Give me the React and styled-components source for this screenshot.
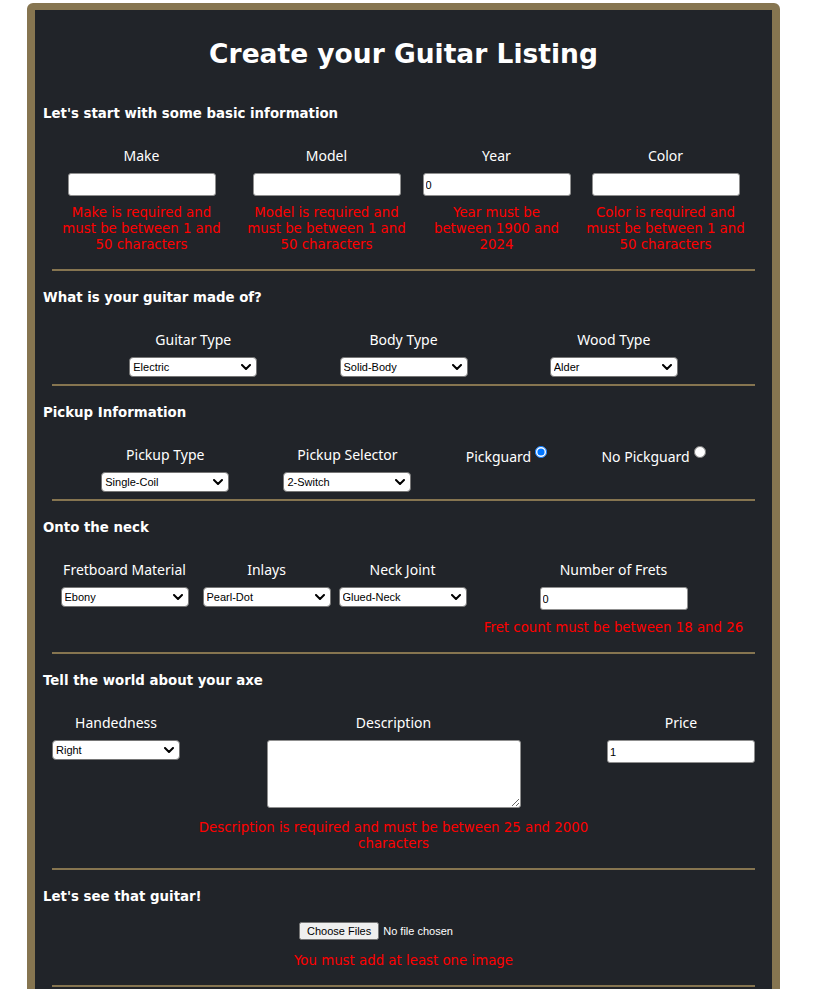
import React from 'react';
import styled, { createGlobalStyle } from 'styled-components';

const Global = createGlobalStyle`
  html, body { margin: 0; padding: 0; background: #ffffff; }
  body { font-family: "DejaVu Sans", Verdana, sans-serif; }
`;

const Card = styled.form`
  box-sizing: border-box;
  width: 753px;
  margin: 3px 0 0 27px;
  border: 8px solid #867550;
  border-top-width: 7px;
  border-radius: 6px;
  background: #212429;
  color: #ffffff;
  padding: 0 8px 40px;
`;

const Title = styled.h1`
  margin: 28px 0 17px;
  font-family: "DejaVu Sans", Verdana, sans-serif;
  font-weight: bold;
  font-size: 26.5px;
  line-height: 32px;
  text-align: center;
`;

const Section = styled.section`
  padding-top: 19px;
`;

const Heading = styled.h5`
  margin: 0 0 ${(p) => p.$mb ?? 24}px;
  font-family: "DejaVu Sans", Verdana, sans-serif;
  font-weight: bold;
  font-size: 13.33px;
  line-height: 16px;
`;

const Divider = styled.hr`
  margin: 0 9px;
  border: 0;
  height: 2px;
  background: #867550;
`;

const GridRow = styled.div`
  display: grid;
  grid-template-columns: ${(p) => p.$cols};
  justify-items: center;
  align-items: start;
  margin: 0 4px 7px;
`;

const FlexRow = styled.div`
  display: flex;
  justify-content: ${(p) => p.$justify || 'space-evenly'};
  align-items: flex-start;
  margin: 0 ${(p) => p.$side || 4}px 7px;
`;

const Field = styled.div`
  display: flex;
  flex-direction: column;
  align-items: center;
  box-sizing: border-box;
  padding: 0 ${(p) => p.$pad || 0}px;
  ${(p) => (p.$w ? `width: ${p.$w}px;` : '')}
`;

const Label = styled.label`
  display: block;
  font-family: "Noto Sans", "Open Sans", sans-serif;
  font-size: 14px;
  line-height: 20px;
  margin-bottom: 7px;
  text-align: center;
  white-space: nowrap;
`;

const TextInput = styled.input`
  box-sizing: border-box;
  width: 148px;
  height: 23px;
  margin: 0;
  padding: 1px 2px;
  border: 1px solid #8f8f8f;
  border-radius: 3px;
  background: #ffffff;
  color: #000000;
  font-family: "Liberation Sans", Arial, sans-serif;
  font-size: 11px;
`;

const SelectWrap = styled.div`
  position: relative;
  width: 128px;
  height: 20px;
`;

const Select = styled.select`
  appearance: none;
  -webkit-appearance: none;
  box-sizing: border-box;
  display: block;
  width: 128px;
  height: 20px;
  margin: 0;
  padding: 0 22px 0 3px;
  border: 1px solid #767676;
  border-radius: 4px;
  font-family: "Liberation Sans", Arial, sans-serif;
  font-size: 11px;
  color: #000000;
  background: #ffffff;
`;

const Chevron = styled.svg`
  position: absolute;
  right: 6px;
  top: 7px;
  width: 10px;
  height: 6px;
  pointer-events: none;
`;

const TextArea = styled.textarea`
  display: block;
  box-sizing: border-box;
  width: 254px;
  height: 68px;
  margin: 0 0 3px;
  border: 1px solid #8f8f8f;
  border-radius: 3px;
  font-family: "Liberation Sans", Arial, sans-serif;
  font-size: 11px;
`;

const FileInput = styled.input`
  font-family: "Liberation Sans", Arial, sans-serif;
  font-size: 11px;
  color: #ffffff;
  margin: 0;
`;

const Error = styled.p`
  margin: ${(p) => p.$top || 9}px 0 9px;
  color: #ff0000;
  font-family: "DejaVu Sans", Verdana, sans-serif;
  font-size: 13.33px;
  line-height: 16px;
  text-align: center;
  white-space: ${(p) => (p.$nowrap ? 'nowrap' : 'normal')};
`;

const RadioItem = styled.div`
  display: flex;
  align-items: flex-start;
`;

const RadioLabel = styled.label`
  font-family: "Noto Sans", "Open Sans", sans-serif;
  font-size: 14px;
  line-height: 20px;
  margin-top: 2px;
  white-space: nowrap;
`;

const Radio = styled.input`
  margin: 1px 0 0 4px;
  width: 12px;
  height: 12px;
`;

const basics = [
  { label: 'Make', error: 'Make is required and must be between 1 and 50 characters' },
  { label: 'Model', error: 'Model is required and must be between 1 and 50 characters' },
  { label: 'Year', error: 'Year must be between 1900 and 2024', value: '0' },
  { label: 'Color', error: 'Color is required and must be between 1 and 50 characters' },
];

const SelectField = ({ label, options }) => (
  <Field>
    <Label>{label}</Label>
    <SelectWrap>
      <Select defaultValue={options[0]}>
        {options.map((o) => (
          <option key={o}>{o}</option>
        ))}
      </Select>
      <Chevron viewBox="0 0 10 6" aria-hidden="true">
        <path d="M1 1 L5 5 L9 1" fill="none" stroke="#000" strokeWidth="2" strokeLinecap="round" strokeLinejoin="round" />
      </Chevron>
    </SelectWrap>
  </Field>
);

export default function App() {
  return (
    <>
      <Global />
      <Card onSubmit={(e) => e.preventDefault()}>
        <Title>Create your Guitar Listing</Title>

        <Section>
          <Heading>Let's start with some basic information</Heading>
          <GridRow $cols="189px 181px 159px 179px">
            {basics.map((f) => (
              <Field key={f.label} $pad={10}>
                <Label>{f.label}</Label>
                <TextInput type="text" defaultValue={f.value || ''} />
                <Error>{f.error}</Error>
              </Field>
            ))}
          </GridRow>
          <Divider />
        </Section>

        <Section>
          <Heading>What is your guitar made of?</Heading>
          <FlexRow>
            <SelectField label="Guitar Type" options={['Electric', 'Acoustic', 'Bass']} />
            <SelectField label="Body Type" options={['Solid-Body', 'Hollow-Body', 'Semi-Hollow']} />
            <SelectField label="Wood Type" options={['Alder', 'Ash', 'Mahogany', 'Maple']} />
          </FlexRow>
          <Divider />
        </Section>

        <Section>
          <Heading>Pickup Information</Heading>
          <FlexRow>
            <SelectField label="Pickup Type" options={['Single-Coil', 'Humbucker', 'P-90']} />
            <SelectField label="Pickup Selector" options={['2-Switch', '3-Switch', '5-Switch']} />
            <RadioItem>
              <RadioLabel htmlFor="pg-yes">Pickguard</RadioLabel>
              <Radio type="radio" id="pg-yes" name="pickguard" defaultChecked />
            </RadioItem>
            <RadioItem>
              <RadioLabel htmlFor="pg-no">No Pickguard</RadioLabel>
              <Radio type="radio" id="pg-no" name="pickguard" />
            </RadioItem>
          </FlexRow>
          <Divider />
        </Section>

        <Section>
          <Heading>Onto the neck</Heading>
          <GridRow $cols="155px 129px 143px 279px">
            <SelectField label="Fretboard Material" options={['Ebony', 'Rosewood', 'Maple']} />
            <SelectField label="Inlays" options={['Pearl-Dot', 'Block', 'None']} />
            <SelectField label="Neck Joint" options={['Glued-Neck', 'Bolt-On', 'Neck-Through']} />
            <Field>
              <Label>Number of Frets</Label>
              <TextInput type="number" defaultValue="0" />
              <Error $top={10} $nowrap>Fret count must be between 18 and 26</Error>
            </Field>
          </GridRow>
          <Divider />
        </Section>

        <Section>
          <Heading>Tell the world about your axe</Heading>
          <FlexRow $justify="space-between" $side={9}>
            <SelectField label="Handedness" options={['Right', 'Left']} />
            <Field $w={394}>
              <Label>Description</Label>
              <TextArea />
              <Error>Description is required and must be between 25 and 2000 characters</Error>
            </Field>
            <Field>
              <Label>Price</Label>
              <TextInput type="number" defaultValue="1" />
            </Field>
          </FlexRow>
          <Divider />
        </Section>

        <Section>
          <Heading $mb={17}>Let's see that guitar!</Heading>
          <FlexRow $justify="center">
            <Field>
              <FileInput type="file" multiple accept="image/*" />
              <Error $top={13}>You must add at least one image</Error>
            </Field>
          </FlexRow>
          <Divider />
        </Section>
      </Card>
    </>
  );
}
